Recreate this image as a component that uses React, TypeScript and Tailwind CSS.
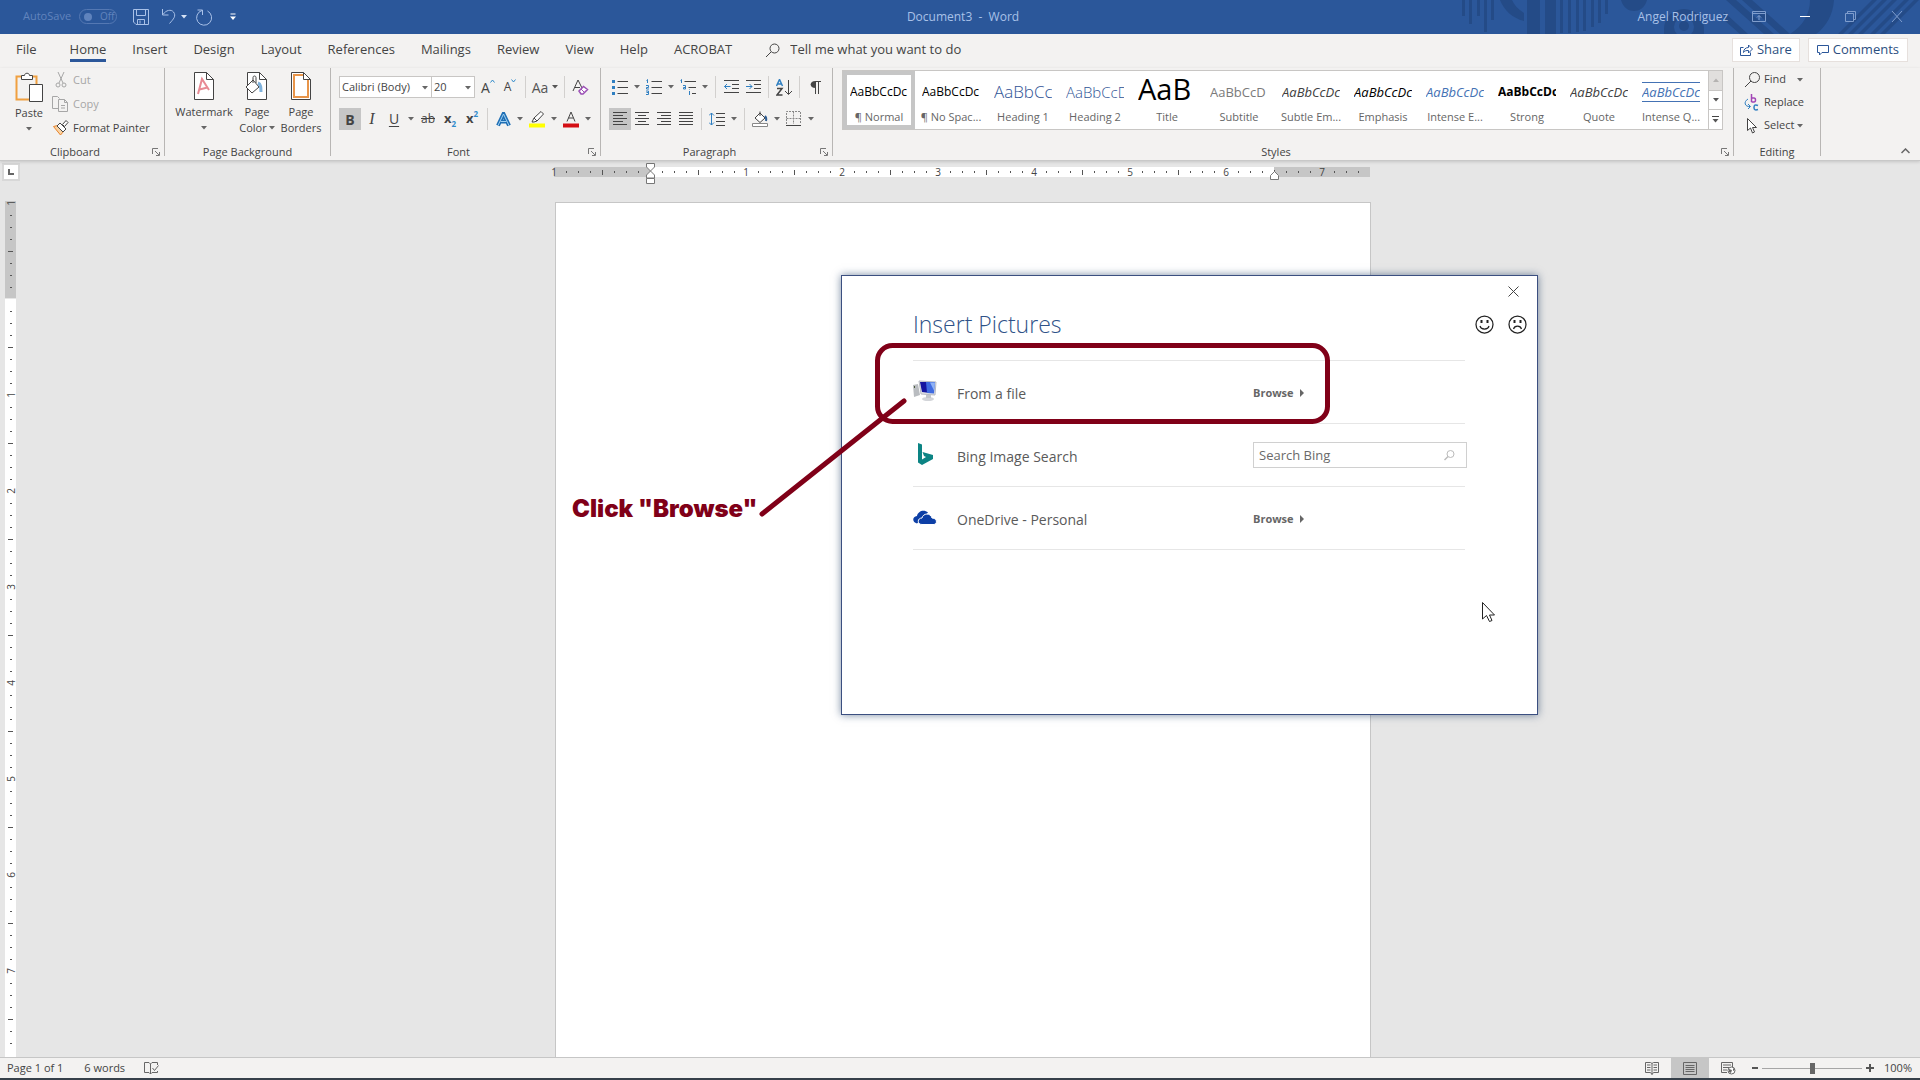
import type { ReactNode } from "react";

const tabs = ["File", "Home", "Insert", "Design", "Layout", "References", "Mailings", "Review", "View", "Help", "ACROBAT"];

const styleItems = [
  { name: "¶ Normal", sample: "AaBbCcDc", look: "text-[12px] leading-5 text-black" },
  { name: "¶ No Spac...", sample: "AaBbCcDc", look: "text-[12px] leading-5 text-black" },
  { name: "Heading 1", sample: "AaBbCc", look: "text-[17px] leading-5 font-light text-[#2f5496]" },
  { name: "Heading 2", sample: "AaBbCcD", look: "text-[15px] leading-5 font-light text-[#2f5496]" },
  { name: "Title", sample: "AaB", look: "text-[29px] leading-[26px] text-black" },
  { name: "Subtitle", sample: "AaBbCcD", look: "text-[13px] leading-5 text-[#7a7a7a]" },
  { name: "Subtle Em...", sample: "AaBbCcDc", look: "text-[13px] leading-5 italic text-[#404040]" },
  { name: "Emphasis", sample: "AaBbCcDc", look: "text-[13px] leading-5 italic text-black" },
  { name: "Intense E...", sample: "AaBbCcDc", look: "text-[13px] leading-5 italic text-[#4472b4]" },
  { name: "Strong", sample: "AaBbCcDc", look: "text-[12px] leading-5 font-bold text-black" },
  { name: "Quote", sample: "AaBbCcDc", look: "text-[13px] leading-5 italic text-[#404040]" },
  { name: "Intense Q...", sample: "AaBbCcDc", look: "text-[13px] leading-[18px] italic text-[#4472b4] border-y border-[#4472b4]" },
];

const horizontalTicks = Array.from({ length: 68 }, (_, i) => i);
const verticalTicks = Array.from({ length: 71 }, (_, i) => i);

function Icon({ w, h, children, className = "" }: { w: number; h: number; children: ReactNode; className?: string }) {
  return (
    <svg width={w} height={h} viewBox={`0 0 ${w} ${h}`} fill="none" stroke="#444" className={`shrink-0 ${className}`} aria-hidden="true">
      {children}
    </svg>
  );
}

function Caret({ className = "" }: { className?: string }) {
  return (
    <svg width="6" height="4" viewBox="0 0 6 4" className={`shrink-0 ${className}`} aria-hidden="true">
      <path d="M0 0h6L3 3.5z" fill="currentColor" />
    </svg>
  );
}

function Tool({ label, active, children }: { label: string; active?: boolean; children: ReactNode }) {
  return (
    <button aria-label={label} className={`flex h-[22px] w-[22px] shrink-0 items-center justify-center ${active ? "bg-[#c6c6c6]" : ""}`}>
      {children}
    </button>
  );
}

function Drop({ label }: { label: string }) {
  return (
    <button aria-label={label} className="flex h-[22px] w-3 shrink-0 items-center justify-center text-[#666]">
      <Caret />
    </button>
  );
}

function Sep() {
  return <div className="mx-1 h-[22px] w-px shrink-0 bg-[#d2d0ce]" />;
}

function Group({ title, launcher, className = "", children }: { title: string; launcher?: boolean; className?: string; children: ReactNode }) {
  return (
    <section className={`flex h-[92px] flex-col ${className}`}>
      <div className="h-[76px]">{children}</div>
      <div className="flex h-4 items-center">
        <span className="flex-1 text-center leading-4">{title}</span>
        {launcher && (
          <button aria-label={`${title} settings`} className="mr-0.5 flex w-3 justify-center">
            <Icon w={8} h={8}>
              <path d="M.5 6V.5H6M3 3l4 4M7.5 4v3.5H4" stroke="#777" />
            </Icon>
          </button>
        )}
      </div>
    </section>
  );
}

function GroupLine() {
  return <div className="h-[88px] w-px shrink-0 bg-[#b8b6b4]" />;
}

function Lines({ rows }: { rows: [number, number][] }) {
  return (
    <Icon w={15} h={14}>
      {rows.map(([from, to], i) => (
        <path key={i} d={`M${from} ${i * 3 + 0.5}H${to}`} />
      ))}
    </Icon>
  );
}

function TitleBar() {
  return (
    <header className="relative flex h-[34px] shrink-0 items-center bg-[#2b579a] pb-px text-[12px] text-[#a9c1e8]">
      <svg className="absolute top-0 right-0" width="480" height="34" viewBox="0 0 480 34" aria-hidden="true">
        <g fill="#244b87">
          <path d="M22 0h3v16h-3zM29 0h3v24h-3zM37 0h3v16h-3zM44 0h3v32h-3zM51 0h3v20h-3zM87 0h13v34H87zM105 0h11v34h-11zM120 0h3v33h-3zM128 0h3v33h-3zM136 0h3v32h-3zM143 0h3v31h-3zM151 0h3v27h-3zM158 0h3v23h-3zM165 0h3v14h-3z" />
          <path d="M60 0h12c2 5 6 9 12 13v8C72 18 64 10 60 0z" />
          <path d="M181 0h26c-2 8-8 11-13 11s-11-3-13-11z" />
          <path d="M224 29a20 20 0 1 1 40 0v5h-40zM234 27a10 10 0 0 0 20 0 10 10 0 0 0-20 0z" fillRule="evenodd" />
          <circle cx="244" cy="26" r="5" />
          <path d="M286 0h10l38 34h-10zM302 0h10l38 34h-10zM284 12l24 22h-8l-16-14zM370 0h24c-1 15-8 27-18 34h-26c13-8 20-20 20-34z" />
          <path d="M432 0h5l-34 34h-5zM442 0h5l-34 34h-5zM452 0h5l-34 34h-5zM464 0h5l-34 34h-5zM474 0h5l-34 34h-5z" />
        </g>
      </svg>
      <div className="relative flex flex-1 items-center pl-[23px]">
        <label className="flex items-center gap-2 text-[11px] text-[#6184bd]">
          AutoSave
          <input type="checkbox" role="switch" className="peer sr-only" disabled />
          <span className="flex h-[15px] w-[38px] items-center gap-2 rounded-full border border-[#5478b3] pl-1 text-[10px]">
            <span className="h-2 w-2 rounded-full bg-[#5f83bd]" />
            Off
          </span>
        </label>
        <button aria-label="Save" className="ml-4">
          <Icon w={16} h={16}>
            <path d="M.5.5h15v15H3L.5 13zM3.5.5v6h9v-6M4.5 15.500v-5h7v5M7 11.500v3" stroke="#a9c1e8" />
          </Icon>
        </button>
        <button aria-label="Undo" className="ml-3">
          <Icon w={16} h={17}>
            <path d="M1.500 1v6h6M2 6.500C5 2 10 1 12.500 4c3 4 0 7-4 11.500" stroke="#a9c1e8" />
          </Icon>
        </button>
        <button aria-label="Undo history" className="ml-1 text-[#d6e2f5]"><Caret /></button>
        <button aria-label="Redo" className="ml-2">
          <Icon w={18} h={18}>
            <path d="M2.500 2h5v5M7 2.500A7.500 7.500 0 1 0 12.500 3" stroke="#a9c1e8" />
          </Icon>
        </button>
        <button aria-label="Customize toolbar" className="ml-4">
          <Icon w={8} h={8}>
            <path d="M1.500 1h5" stroke="#fff" />
            <path d="M1 3.500h6L4 7z" fill="#fff" stroke="none" />
          </Icon>
        </button>
      </div>
      <h1 className="relative whitespace-pre">Document3  -  Word</h1>
      <div className="relative flex flex-1 items-center justify-end pr-[17px]">
        <span>Angel Rodriguez</span>
        <button aria-label="Ribbon display options" className="ml-6">
          <Icon w={14} h={11}>
            <path d="M.5.5h13v10H.5zM.5 2.500h13M7 9V4.500M5 6.500l2-2 2 2" stroke="#7f9dcd" />
          </Icon>
        </button>
        <button aria-label="Minimize" className="ml-[33px]">
          <Icon w={12} h={11}><path d="M1 5.500h10" stroke="#fff" /></Icon>
        </button>
        <button aria-label="Restore" className="ml-[34px]">
          <Icon w={12} h={11}><path d="M.5 2.500h8v8h-8zM2.500 2.500v-2h8v8h-2" stroke="#7f9dcd" /></Icon>
        </button>
        <button aria-label="Close" className="ml-[34px]">
          <Icon w={12} h={11}><path d="M1 0l10 11M11 0L1 11" stroke="#7f9dcd" /></Icon>
        </button>
      </div>
    </header>
  );
}

function TabRow() {
  return (
    <nav className="flex h-[34px] shrink-0 items-center bg-[#f3f2f1] pb-0.5 text-[13px]">
      {tabs.map((tab) => (
        <button key={tab} className={`flex h-full flex-col items-center pt-1.5 ${tab === "File" ? "pr-5 pl-4" : "px-[13px]"}`}>
          <span className={`leading-[19px] ${tab === "Home" ? "border-b-[3px] border-[#2b579a]" : ""}`}>{tab}</span>
        </button>
      ))}
      <label className="ml-5 flex flex-1 items-center gap-2.5">
        <Icon w={15} h={15}>
          <circle cx="9.500" cy="5.500" r="4.500" />
          <path d="M6 9L1 14" />
        </Icon>
        <input placeholder="Tell me what you want to do" className="w-56 bg-transparent outline-none placeholder:text-[#444]" />
      </label>
      <button className="flex h-6 items-center gap-1 border border-[#e6e0dd] bg-white px-[7px] text-[#2b4f7f]">
        <Icon w={13} h={12}>
          <path d="M3.500 3.500h-3v8h10v-3M3.500 8.500c0-3 2-5 5-5v-2.500l4 4-4 4v-2.500c-2 0-4 0-5 2z" stroke="#2b579a" />
        </Icon>
        Share
      </button>
      <button className="mr-3 ml-2 flex h-6 items-center gap-1 border border-[#e6e0dd] bg-white px-2 text-[#2b4f7f]">
        <Icon w={12} h={11}>
          <path d="M.5.5h11v7H5l-2.500 2.500V7.500h-2z" stroke="#2b579a" />
        </Icon>
        Comments
      </button>
    </nav>
  );
}

function ClipboardGroup() {
  return (
    <Group title="Clipboard" launcher className="w-[164px]">
      <div className="flex pl-3.5">
        <button className="flex w-[30px] flex-col items-center pt-1">
          <Icon w={28} h={31}>
            <path d="M6 4.500H1.500v23H14M17 4.500h4.500V12" stroke="#f0a040" strokeWidth="2" />
            <path d="M6.500 7.500v-4h3c0-3 5-3 5 0h3v4z" fill="#fff" />
            <path d="M14.500 12.500h13v17h-13z" fill="#fff" />
          </Icon>
          <span className="mt-0.5 leading-4">Paste</span>
          <Caret className="mt-1.5 text-[#666]" />
        </button>
        <div className="ml-2 flex flex-col text-left">
          <button className="flex h-6 items-center gap-1 text-[#a6a6a6]">
            <Icon w={17} h={16}>
              <path d="M6 0l5 11M12 0L7 11" stroke="#a6a6a6" />
              <circle cx="6" cy="13" r="2" stroke="#a6a6a6" />
              <circle cx="12" cy="13" r="2" stroke="#a6a6a6" />
            </Icon>
            Cut
          </button>
          <button className="flex h-6 items-center gap-1 text-[#a6a6a6]">
            <Icon w={17} h={16}>
              <path d="M6 12.500H.5V.5h5l2 2M6.500 3.500h6l3 3v9h-9zM12.500 3.500v3h3M9 9.500h4M9 12h4" stroke="#a6a6a6" />
            </Icon>
            Copy
          </button>
          <button className="flex h-6 items-center gap-1 whitespace-nowrap">
            <Icon w={17} h={16}>
              <path d="M1.500 6.500l4-1 6 6-3 3.500z" fill="#f9d3a4" stroke="#e8842c" />
              <path d="M5 6l3-3 6 6-3 3zM10.500 4.500l3.500-4 2 2-3.500 4z" fill="#fff" />
            </Icon>
            Format Painter
          </button>
        </div>
      </div>
    </Group>
  );
}

function PageIcon({ children }: { children?: ReactNode }) {
  return (
    <Icon w={24} h={28}>
      <path d="M2.500.5h12l7 7v20h-19z" fill="#fff" />
      {children}
      <path d="M14.500.5v7h7z" fill="#fff" />
    </Icon>
  );
}

function BackgroundGroup() {
  return (
    <Group title="Page Background" className="w-[165px]">
      <div className="flex pt-1 pl-2 leading-4">
        <button className="flex w-[62px] flex-col items-center">
          <PageIcon>
            <path d="M6 22l4-15 7 11M7.500 17.500l8-2" stroke="#e88a94" strokeWidth="2" />
          </PageIcon>
          <span className="mt-1">Watermark</span>
          <Caret className="mt-1.5 text-[#666]" />
        </button>
        <button className="flex w-11 flex-col items-center">
          <PageIcon>
            <path d="M13 11c3 1 3 5 3 9" stroke="#7fb2dc" strokeWidth="3" />
            <path d="M1 15l7-7 6 7-7 6zM8 11V5.500c0-2 3-2 3 0V11" fill="#fff" />
          </PageIcon>
          <span className="mt-1">Page</span>
          <span className="flex items-center gap-0.5">Color<Caret className="text-[#666]" /></span>
        </button>
        <button className="flex w-11 flex-col items-center">
          <PageIcon>
            <path d="M5 3h10l4 5v17H5z" stroke="#e8954a" strokeWidth="2" />
          </PageIcon>
          <span className="mt-1">Page</span>
          <span>Borders</span>
        </button>
      </div>
    </Group>
  );
}

function FontGroup() {
  return (
    <Group title="Font" launcher className="w-[269px]">
      <div className="flex flex-col gap-2.5 px-2 pt-2">
        <div className="flex items-center">
          <div className="relative h-[22px] w-[93px]">
            <select aria-label="Font" className="h-full w-full appearance-none border border-[#c8c6c4] bg-white pl-0.5">
              <option>Calibri (Body)</option>
            </select>
            <Caret className="pointer-events-none absolute top-2.5 right-1 text-[#666]" />
          </div>
          <div className="relative h-[22px] w-[43px]">
            <select aria-label="Font size" className="h-full w-full appearance-none border border-l-0 border-[#c8c6c4] bg-white pl-0.5">
              <option>20</option>
            </select>
            <Caret className="pointer-events-none absolute top-2.5 right-1 text-[#666]" />
          </div>
          <div className="w-0.5" />
          <Tool label="Grow font">
            <span className="text-[14px]">A</span>
            <Icon w={5} h={4} className="mb-3"><path d="M.5 3.500l2-2.500 2 2.500" stroke="#2f8acb" /></Icon>
          </Tool>
          <Tool label="Shrink font">
            <span className="text-[12px]">A</span>
            <Icon w={5} h={4} className="mb-3"><path d="M.5.5l2 2.500 2-2.500" stroke="#2f8acb" /></Icon>
          </Tool>
          <Sep />
          <button aria-label="Change case" className="flex w-[30px] items-center justify-center gap-1 text-[14px] text-[#555]">
            Aa<Caret />
          </button>
          <Sep />
          <Tool label="Clear formatting">
            <Icon w={17} h={16}>
              <path d="M1 12L6 1l4.500 9M3 8.500h5" />
              <path d="M7 12l4.500-4.500 4 3L11 15H9z" fill="#fff" stroke="#9b4fb5" strokeWidth="1.500" />
              <path d="M9 10l3.500 3.500" stroke="#9b4fb5" />
            </Icon>
          </Tool>
        </div>
        <div className="flex items-center">
          <Tool label="Bold" active><b className="text-[14px]">B</b></Tool>
          <Tool label="Italic"><i className="font-['Liberation_Serif',serif] text-[16px]">I</i></Tool>
          <Tool label="Underline"><span className="text-[14px] leading-4 underline underline-offset-2">U</span></Tool>
          <Drop label="Underline styles" />
          <Tool label="Strikethrough"><span className="text-[12px] line-through">ab</span></Tool>
          <Tool label="Subscript"><b className="text-[13px]">x</b><span className="mt-2.5 text-[8px] font-bold text-[#2f8acb]">2</span></Tool>
          <Tool label="Superscript"><b className="text-[13px]">x</b><span className="mb-2.5 text-[8px] font-bold text-[#2f8acb]">2</span></Tool>
          <Sep />
          <Tool label="Text effects">
            <Icon w={15} h={15}>
              <path d="M2 13.500L7.500 2 13 13.500M4.500 9.500h6" stroke="#1f6fb5" strokeWidth="4" />
              <path d="M2 13.500L7.500 2 13 13.500M4.500 9.500h6" stroke="#9fd0f2" />
            </Icon>
          </Tool>
          <Drop label="Text effect styles" />
          <Tool label="Highlight">
            <Icon w={16} h={17}>
              <path d="M0 12.500h16v4H0z" fill="#ffff00" stroke="none" />
              <path d="M3 11l2-4 7-6.500 2.500 2.500L8 10l-3 1zM5 7l3 3" fill="#fff" />
            </Icon>
          </Tool>
          <Drop label="Highlight colors" />
          <Tool label="Font color">
            <Icon w={16} h={17}>
              <path d="M0 12.500h16v4H0z" fill="#d40f14" stroke="none" />
              <path d="M4 10.500L8 1l4 9.500M5.500 7h5" />
            </Icon>
          </Tool>
          <Drop label="Font colors" />
        </div>
      </div>
    </Group>
  );
}

function ParagraphGroup() {
  return (
    <Group title="Paragraph" launcher className="w-[231px]">
      <div className="flex flex-col gap-2.5 px-2 pt-2">
        <div className="flex items-center">
          <Tool label="Bullets">
            <Icon w={16} h={16}>
              <path d="M5.500 2.500H16M5.500 8.500H16M5.500 14.500H16" />
              <path d="M0 1h3v3H0zM0 7h3v3H0zM0 13h3v3H0z" fill="#2f7fc1" stroke="none" />
            </Icon>
          </Tool>
          <Drop label="Bullet styles" />
          <Tool label="Numbering">
            <Icon w={16} h={16}>
              <path d="M5.500 2.500H16M5.500 8.500H16M5.500 14.500H16" />
              <path d="M.5 1.500l1-1V4M0 6.500h2.500v2H.5v1.500H3M0 12h2.500v3.500H0M.5 13.500h2" stroke="#2f7fc1" />
            </Icon>
          </Tool>
          <Drop label="Numbering styles" />
          <Tool label="Multilevel list">
            <Icon w={16} h={16}>
              <path d="M4.500 2.500H16M8.500 8.500H16M12 14.500h4" />
              <path d="M.5 1.500l1-1V4M3 6.500h2.500V10H3.500V8.500h2M9.500 12v4M9.500 10.500v.5" stroke="#2f7fc1" />
            </Icon>
          </Tool>
          <Drop label="List styles" />
          <Sep />
          <Tool label="Decrease indent">
            <Icon w={15} h={14}>
              <path d="M0 .5h15M8 4.500h7M8 8.500h7M0 12.500h15" />
              <path d="M6.500 6.500h-6M3 4L.5 6.500 3 9" stroke="#2f7fc1" />
            </Icon>
          </Tool>
          <Tool label="Increase indent">
            <Icon w={15} h={14}>
              <path d="M0 .5h15M8 4.500h7M8 8.500h7M0 12.500h15" />
              <path d="M0 6.500h6M3.500 4L6 6.500 3.500 9" stroke="#2f7fc1" />
            </Icon>
          </Tool>
          <Sep />
          <Tool label="Sort">
            <Icon w={17} h={17}>
              <path d="M.5 7L3.500.5 6.500 7M1.500 5h4" stroke="#2f7fc1" strokeWidth="1.500" />
              <path d="M1 9.500h5L1 16h5.500" strokeWidth="1.500" />
              <path d="M12.500 1v14M9 12l3.500 3.500L16 12" />
            </Icon>
          </Tool>
          <Sep />
          <Tool label="Show marks">
            <Icon w={11} h={13}>
              <path d="M5 .5h6M5.500 0v13M8.500 0v13" />
              <path d="M5.500 0C-1 0-1 7 5.500 7z" fill="#444" stroke="none" />
            </Icon>
          </Tool>
        </div>
        <div className="flex items-center">
          <Tool label="Align left" active><Lines rows={[[0, 14], [0, 10], [0, 14], [0, 10], [0, 14]]} /></Tool>
          <Tool label="Center"><Lines rows={[[0, 14], [3, 11], [0, 14], [3, 11], [0, 14]]} /></Tool>
          <Tool label="Align right"><Lines rows={[[0, 14], [4, 14], [0, 14], [4, 14], [0, 14]]} /></Tool>
          <Tool label="Justify"><Lines rows={[[0, 14], [0, 14], [0, 14], [0, 14], [0, 14]]} /></Tool>
          <Sep />
          <Tool label="Line spacing">
            <Icon w={16} h={14}>
              <path d="M7 1.500h9M7 5.500h9M7 9.500h9M7 13.500h9" />
              <path d="M2.500 1v12M0 3.500L2.500 1 5 3.500M0 10.500L2.500 13 5 10.500" stroke="#2f7fc1" />
            </Icon>
          </Tool>
          <Drop label="Spacing options" />
          <Sep />
          <Tool label="Shading">
            <Icon w={17} h={16}>
              <path d="M3 7l5-5 5 5-5 4.500zM8 5V.5" fill="#fff" />
              <path d="M13 5c1 1 1.500 3 1 5" stroke="#2f5f95" strokeWidth="2" />
              <path d="M.5 12.500h15v3H.5z" fill="#fff" stroke="#888" />
            </Icon>
          </Tool>
          <Drop label="Shading colors" />
          <Tool label="Borders">
            <Icon w={16} h={16}>
              <path d="M.5 13V.5h14V13M.5 7.500h14M7.500.5V13" stroke="#888" strokeDasharray="2 1" />
              <path d="M0 14.500h15" />
            </Icon>
          </Tool>
          <Drop label="Border styles" />
        </div>
      </div>
    </Group>
  );
}

function StylesGroup() {
  return (
    <Group title="Styles" launcher className="min-w-0 flex-1">
      <div className="pt-0.5 pr-2.5 pl-[9px]">
        <div className="flex h-[60px] border border-[#c8c6c4] bg-white">
          <div className="flex min-w-0 flex-1 overflow-hidden">
            {styleItems.map((item, i) => (
              <button
                key={item.name}
                className={`flex w-[72px] shrink-0 flex-col items-center justify-between border-4 ${i === 0 ? "border-[#c6c6c6]" : "border-transparent"}`}
              >
                <span className="flex h-[27px] w-[58px] items-end overflow-hidden">
                  <span className={`w-full text-left whitespace-nowrap ${item.look}`}>{item.sample}</span>
                </span>
                <span className="text-[11px] leading-4 whitespace-nowrap text-[#666]">{item.name}</span>
              </button>
            ))}
          </div>
          <div className="flex w-3.5 flex-col border-l border-[#c8c6c4] text-[#555]">
            <button aria-label="Previous styles" className="flex flex-1 items-center justify-center bg-[#e1dfdd] text-[#b5b3b1]">
              <Caret className="rotate-180" />
            </button>
            <button aria-label="Next styles" className="flex flex-1 items-center justify-center border-y border-[#c8c6c4]"><Caret /></button>
            <button aria-label="More styles" className="flex flex-1 items-center justify-center">
              <Icon w={7} h={7}>
                <path d="M0 .5h7" />
                <path d="M.5 3h6l-3 3.500z" fill="#555" stroke="none" />
              </Icon>
            </button>
          </div>
        </div>
      </div>
    </Group>
  );
}

function EditingGroup() {
  return (
    <Group title="Editing" className="w-[86px]">
      <div className="flex flex-col pl-2.5">
        <button className="flex h-[23px] items-center gap-[3px]">
          <Icon w={17} h={16}>
            <circle cx="10.500" cy="5.500" r="5" />
            <path d="M7 9l-6 6" />
          </Icon>
          Find<Caret className="ml-2 text-[#666]" />
        </button>
        <button className="flex h-[23px] items-center gap-[3px]">
          <Icon w={17} h={17}>
            <path d="M7.500 0v8M7.500 4h2.500c2 0 2 4 0 4H7.500" stroke="#a144b5" strokeWidth="1.500" />
            <path d="M14 11.500c-3-1.500-4 0-4 2s1 3 4 2" stroke="#2f7fc1" strokeWidth="1.500" />
            <path d="M4 5C-1 8 1 13 6 12.500M4 10l2.500 2.500L4 15" stroke="#2f7fc1" />
          </Icon>
          Replace
        </button>
        <button className="flex h-[23px] items-center gap-[3px]">
          <Icon w={17} h={16}>
            <path d="M3.500.5v12l3-2.500 2 5 2-1-2-4.500h4z" fill="#fff" />
          </Icon>
          Select<Caret className="text-[#666]" />
        </button>
      </div>
    </Group>
  );
}

function Ribbon() {
  return (
    <div className="relative z-10 flex h-[93px] shrink-0 border-b border-[#c8c8c8] bg-[#f3f2f1] text-[11px] shadow-[0_1px_3px_rgba(0,0,0,0.15)]">
      <ClipboardGroup />
      <GroupLine />
      <BackgroundGroup />
      <GroupLine />
      <FontGroup />
      <GroupLine />
      <ParagraphGroup />
      <GroupLine />
      <StylesGroup />
      <GroupLine />
      <EditingGroup />
      <GroupLine />
      <div className="flex w-[99px] items-end justify-end pr-2.5 pb-1.5">
        <button aria-label="Collapse ribbon">
          <Icon w={9} h={6}><path d="M.5 5l4-4 4 4" strokeWidth="1.500" stroke="#666" /></Icon>
        </button>
      </div>
    </div>
  );
}

function RulerMark({ index, vertical }: { index: number; vertical?: boolean }) {
  const inch = Math.abs(index / 8 - 1);
  if (index % 8 === 0) return inch === 0 ? null : <span className={vertical ? "-rotate-90" : ""}>{inch}</span>;
  if (index % 8 === 4) return <span className={`bg-[#555] ${vertical ? "h-px w-[5px]" : "h-[5px] w-px"}`} />;
  return <span className={`bg-[#555] ${vertical ? "h-px w-0.5" : "h-0.5 w-px"}`} />;
}

function HorizontalRuler() {
  return (
    <div className="relative flex h-[10px] w-[816px] bg-white text-[10px] leading-[10px]">
      <div className="w-24 bg-[#c6c6c6]" />
      <div className="flex-1" />
      <div className="w-24 bg-[#c6c6c6]" />
      <div className="absolute inset-y-0 -left-1.5 flex">
        {horizontalTicks.map((i) => (
          <span key={i} className="flex w-3 items-center justify-center"><RulerMark index={i} /></span>
        ))}
      </div>
      <Icon w={9} h={22} className="absolute -top-1 left-[92px]">
        <path d="M.5.5h8v3.500l-4 4-4-4zM4.500 8l4 4v3h-8v-3zM.5 15.500h8v5h-8z" fill="#fff" stroke="#777" />
      </Icon>
      <Icon w={9} h={9} className="absolute top-1 left-[716px]">
        <path d="M.5 8.500v-4l4-4 4 4v4z" fill="#fff" stroke="#777" />
      </Icon>
    </div>
  );
}

function VerticalRuler() {
  return (
    <div className="relative ml-[5px] min-h-0 w-[11px] flex-1 overflow-hidden bg-white text-[10px] leading-3">
      <div className="h-[98px] border-b border-[#e6e6e6] bg-[#c6c6c6]" />
      <div className="absolute inset-x-0 -top-1 flex flex-col">
        {verticalTicks.map((i) => (
          <span key={i} className="flex h-3 items-center justify-center"><RulerMark index={i} vertical /></span>
        ))}
      </div>
    </div>
  );
}

function BrowseButton() {
  return (
    <button className="flex items-center gap-1.5 pt-0.5 text-[11px] font-bold text-[#666]">
      Browse
      <svg width="4" height="8" viewBox="0 0 4 8" aria-hidden="true"><path d="M0 0l4 4-4 4z" fill="#666" /></svg>
    </button>
  );
}

function SourceRow({ icon, name, children }: { icon: ReactNode; name: string; children: ReactNode }) {
  return (
    <li className="flex h-[63px] items-center border-b border-[#e6e6e6]">
      <span className="w-11 pb-0.5">{icon}</span>
      <span className="flex-1 pt-0.5 text-[14px] text-[#5a5a5a]">{name}</span>
      <div className="w-[212px]">{children}</div>
    </li>
  );
}

function InsertDialog() {
  return (
    <div role="dialog" aria-label="Insert Pictures" className="absolute top-[114px] left-[287px] h-[440px] w-[697px] border border-[#3b4f80] bg-white shadow-[0_0_8px_rgba(30,60,100,0.6)]">
      <div className="flex h-[30px] items-center justify-end pr-[18px]">
        <button aria-label="Close dialog">
          <Icon w={11} h={11}><path d="M.5.5l10 10M10.500.5l-10 10" /></Icon>
        </button>
      </div>
      <div className="flex h-9 items-center pr-2.5 pl-[71px]">
        <h2 className="flex-1 text-[23px] font-light text-[#2f5288]">Insert Pictures</h2>
        <button aria-label="Send a smile" className="mr-[14px]">
          <Icon w={19} h={19}>
            <circle cx="9.500" cy="9.500" r="8.500" stroke="#222" strokeWidth="1.250" />
            <path d="M5 11c1 4 8 4 9 0" stroke="#222" strokeWidth="1.250" />
            <path d="M5.500 5h2v3h-2zM11.500 5h2v3h-2z" fill="#222" stroke="none" />
          </Icon>
        </button>
        <button aria-label="Send a frown">
          <Icon w={19} h={19}>
            <circle cx="9.500" cy="9.500" r="8.500" stroke="#222" strokeWidth="1.250" />
            <path d="M5.500 14c1-4 7-4 8 0" stroke="#222" strokeWidth="1.250" />
            <path d="M5.500 5h2v3h-2zM11.500 5h2v3h-2z" fill="#222" stroke="none" />
          </Icon>
        </button>
      </div>
      <ul className="mt-[18px] mr-[72px] ml-[71px] border-t border-[#e6e6e6]">
        <SourceRow
          name="From a file"
          icon={
            <svg width="24" height="22" viewBox="0 0 24 22" aria-hidden="true">
              <path d="M0 5l5-1 2 11-6 2z" fill="#b9bcc0" />
              <path d="M1 6l1 0v2H1z" fill="#4b5a3c" />
              <path d="M6 1l17 1-1 13-14-1z" fill="#dfe1e6" stroke="#b7bac2" />
              <path d="M7 2l8 0 2 11-8-1z" fill="#1414a0" />
              <path d="M13 2h9l-1 11.500-7-.5z" fill="#3f6be0" />
              <path d="M17 2.500h5l-1 8z" fill="#8fb2f5" />
              <ellipse cx="15" cy="19" rx="6" ry="2" fill="#d3d5d9" />
              <path d="M13 15h5v3h-5z" fill="#c3c6cb" />
            </svg>
          }
        >
          <BrowseButton />
        </SourceRow>
        <SourceRow
          name="Bing Image Search"
          icon={
            <svg width="24" height="24" viewBox="0 0 24 24" aria-hidden="true">
              <path d="M5 1l4 1.500v15l4-2.500-2-1-1.500-4L20 13v4l-11 6-4-2.500z" fill="#0c8484" />
            </svg>
          }
        >
          <div className="-mr-0.5 flex h-[26px] items-center border border-[#d0d0d0] pr-[11px] pl-[5px]">
            <input aria-label="Search Bing" placeholder="Search Bing" className="min-w-0 flex-1 pt-0.5 text-[13px] outline-none placeholder:text-[#6a6a6a]" />
            <Icon w={11} h={11}>
              <circle cx="6.500" cy="4" r="3.500" stroke="#bbb" />
              <path d="M4 6.500L.5 10" stroke="#bbb" strokeWidth="1.500" />
            </Icon>
          </div>
        </SourceRow>
        <SourceRow
          name="OneDrive - Personal"
          icon={
            <svg width="24" height="15" viewBox="0 0 24 15" aria-hidden="true">
              <path d="M4 13.500C-1 12.500-1 6.500 4 6 5 1 11-1 15 2.500" fill="#0d3fa6" />
              <path d="M9 14.500c-5 0-5-6.500 0-6.500C10 3 17.500 2.500 19 8c5 0 6 5.500 2 6.500z" fill="#0d3fa6" stroke="#fff" />
            </svg>
          }
        >
          <BrowseButton />
        </SourceRow>
      </ul>
    </div>
  );
}

function Workspace() {
  return (
    <main className="relative flex min-h-0 flex-1 overflow-hidden bg-[#e6e6e6]">
      <div className="flex w-[22px] shrink-0 flex-col">
        <div className="flex h-10 pt-0.5 pl-0.5">
          <button aria-label="Tab selector" className="flex h-[18px] w-[18px] items-center justify-center border-2 border-[#d8d8d8] bg-white">
            <Icon w={6} h={6}><path d="M1 0v5h5" strokeWidth="2" stroke="#666" /></Icon>
          </button>
        </div>
        <VerticalRuler />
      </div>
      <div className="flex min-w-0 flex-1 justify-center pr-[17px]">
        <div className="relative flex w-[817px] shrink-0 flex-col pt-1.5">
          <HorizontalRuler />
          <div className="mt-[25px] ml-px flex-1 border border-b-0 border-[#c6c6c6] bg-white" />
          <InsertDialog />
          <p className="absolute top-[333px] left-[18px] font-['Inter',sans-serif] text-[24px] leading-[30px] font-black whitespace-nowrap text-[#800018]">Click "Browse"</p>
          <svg className="pointer-events-none absolute top-0 left-0" width="817" height="400" viewBox="0 0 817 400" fill="none" stroke="#800018" strokeWidth="5" strokeLinecap="round" aria-hidden="true">
            <rect x="323.500" y="184.500" width="450" height="76" rx="15" />
            <path d="M208 353L350 240" />
          </svg>
          <svg className="pointer-events-none absolute top-[441px] left-[928px]" width="13" height="20" viewBox="0 0 13 20" aria-hidden="true">
            <path d="M.5.5v16.500l4-3.500 3 6 2.500-1-2.500-5.500h5z" fill="#fff" stroke="#222" />
          </svg>
        </div>
      </div>
    </main>
  );
}

function StatusBar() {
  return (
    <footer className="flex h-[23px] shrink-0 items-center border-t border-b-2 border-t-[#c6c6c6] border-b-[#36404a] bg-[#f3f2f1] pr-2 pl-[7px] text-[11px]">
      <button>Page 1 of 1</button>
      <button className="ml-[21px]">6 words</button>
      <button aria-label="Proofing" className="ml-[19px]">
        <Icon w={15} h={13}>
          <path d="M6.500 12V2L5 .5H.5v10H5zM6.500 2L8 .5h5.500V3M6.500 12L8 10.500h5.500V9M8.500 6l2 2.500 4-5" stroke="#666" />
        </Icon>
      </button>
      <div className="flex-1" />
      <button aria-label="Read mode">
        <Icon w={14} h={13}>
          <path d="M7 12.500V1.500L5.500.5h-5v10h5zM7 1.500L8.500.5h5v10h-5L7 12.500M2 3h3.500M2 5.500h3.500M2 8h3.500M8.500 3H12M8.500 5.500H12M8.500 8H12" stroke="#666" />
        </Icon>
      </button>
      <button aria-label="Print layout" className="ml-3 flex h-full w-[38px] items-center justify-center bg-[#c6c6c6]">
        <Icon w={14} h={13}>
          <path d="M.5.5h13v12H.5zM2.500 3.500h9M2.500 5.500h9M2.500 7.500h9M2.500 9.500h9" stroke="#666" />
        </Icon>
      </button>
      <button aria-label="Web layout" className="ml-3">
        <Icon w={15} h={13}>
          <path d="M6 10.500H.5V.5h11V5M2 3h8M2 5.500h6M2 8h4" stroke="#666" />
          <circle cx="10.500" cy="8.500" r="3.500" fill="#fff" stroke="#666" />
          <path d="M8 7l3 1-1 3-2-1zM12 6l2 2-2 1z" fill="#666" stroke="none" />
        </Icon>
      </button>
      <button aria-label="Zoom out" className="ml-4">
        <Icon w={6} h={8}><path d="M0 4h6" stroke="#555" strokeWidth="2" /></Icon>
      </button>
      <input
        type="range"
        aria-label="Zoom"
        defaultValue={50}
        className="mx-1 h-px w-[100px] appearance-none bg-[#a6a6a6] [&::-webkit-slider-thumb]:h-[11px] [&::-webkit-slider-thumb]:w-[5px] [&::-webkit-slider-thumb]:appearance-none [&::-webkit-slider-thumb]:bg-[#666]"
      />
      <button aria-label="Zoom in" className="mr-2.5">
        <Icon w={8} h={8}><path d="M0 4h8M4 0v8" stroke="#555" strokeWidth="2" /></Icon>
      </button>
      <button>100%</button>
    </footer>
  );
}

export default function App() {
  return (
    <div className="flex h-screen flex-col overflow-hidden bg-[#e6e6e6] font-['Open_Sans','Noto_Sans',sans-serif] text-[#444]">
      <TitleBar />
      <TabRow />
      <Ribbon />
      <Workspace />
      <StatusBar />
    </div>
  );
}
